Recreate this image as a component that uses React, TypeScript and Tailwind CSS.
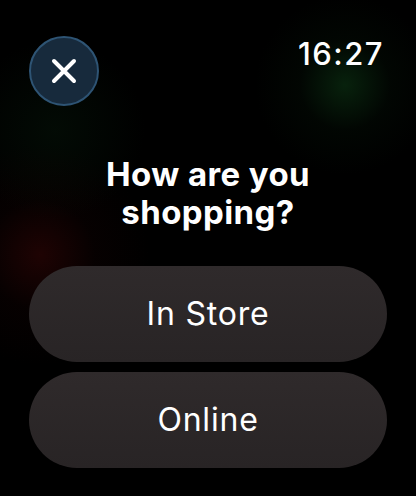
import React from "react";

export default function App() {
  return (
    <div className="relative w-[416px] h-[496px] overflow-hidden bg-black font-['Inter','Roboto',sans-serif] text-white">
      {/* background glows */}
      <div className="pointer-events-none absolute inset-0 bg-[radial-gradient(circle_at_345px_85px,rgba(18,80,30,0.42),rgba(10,40,15,0.15)_45px,transparent_90px),radial-gradient(circle_at_40px_255px,rgba(95,10,10,0.32),rgba(50,5,5,0.12)_55px,transparent_110px),radial-gradient(circle_at_55px_130px,rgba(15,60,25,0.18),transparent_90px)]" />

      <div className="relative flex flex-col px-[29px]">
        {/* top bar */}
        <div className="flex items-start justify-between pt-[36px]">
          <button className="flex h-[70px] w-[70px] items-center justify-center rounded-full border-2 border-[#2e5474] bg-[#172a3c]">
            <svg width="28" height="28" viewBox="0 0 28 28" fill="none">
              <path
                d="M4 4L24 24M24 4L4 24"
                stroke="white"
                strokeWidth="4"
                strokeLinecap="round"
              />
            </svg>
          </button>
          <span className="mt-[-2px] mr-[3px] text-[31px] font-medium leading-[40px] tracking-[1.5px]">
            16:27
          </span>
        </div>

        {/* title */}
        <h1 className="mt-[49px] text-center text-[33px] font-bold leading-[38px] tracking-[0.4px]">
          How are you
          <br />
          shopping?
        </h1>

        {/* options */}
        <div className="mt-[35px] flex flex-col gap-[10px]">
          <button className="flex h-[96px] w-full items-center justify-center rounded-full bg-gradient-to-b from-[#2f2a2b] to-[#282425] text-[32px] font-normal tracking-[0.8px]">
            In Store
          </button>
          <button className="flex h-[96px] w-full items-center justify-center rounded-full bg-gradient-to-b from-[#2f2a2b] to-[#282425] text-[32px] font-normal tracking-[0.8px]">
            Online
          </button>
        </div>
      </div>
    </div>
  );
}
